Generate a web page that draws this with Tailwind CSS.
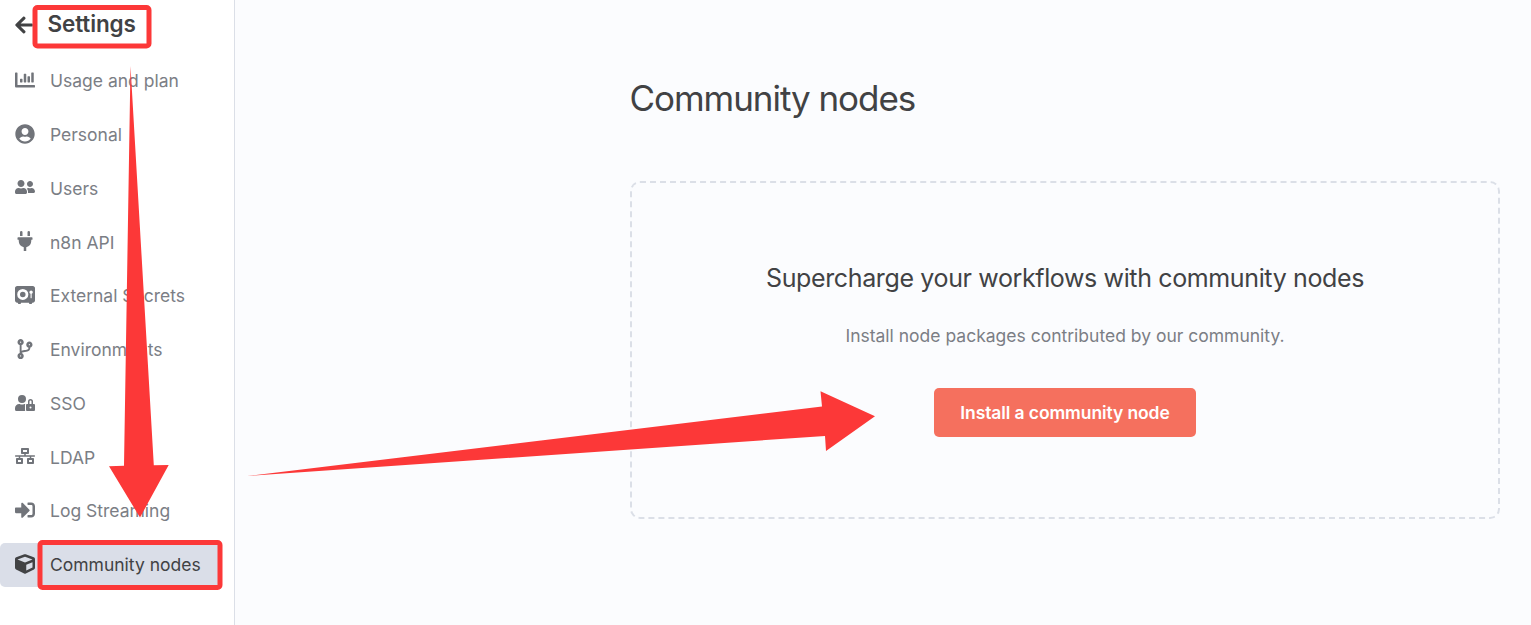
<!DOCTYPE html>
<html lang="en">
<head>
<meta charset="utf-8">
<title>Community nodes</title>
<script src="https://cdn.jsdelivr.net/npm/@tailwindcss/browser@4"></script>
</head>
<body class="relative flex h-[625px] w-[1531px] overflow-hidden bg-[#fbfcfe] font-['Inter',sans-serif] text-[17.5px] text-[#414244]">
<aside class="flex w-[235px] shrink-0 flex-col border-r border-[#dbdfe7] bg-white">
  <header class="flex h-[49px] items-center gap-[14.5px] pl-[15px]">
    <svg class="h-5 w-[18px] shrink-0 fill-current" viewBox="0 0 448 512"><path d="M257.5 445.1l-22.2 22.2c-9.4 9.4-24.6 9.4-33.9 0L7 273c-9.4-9.4-9.4-24.6 0-33.9L201.4 44.7c9.4-9.4 24.6-9.4 33.9 0l22.2 22.2c9.5 9.5 9.3 25-.4 34.3L136.6 216H424c13.3 0 24 10.7 24 24v32c0 13.3-10.7 24-24 24H136.6l120.5 114.8c9.8 9.3 10 24.8.4 34.3z"/></svg>
    <h2 class="pb-px text-[22.5px] leading-7 font-semibold tracking-[-0.12px]">Settings</h2>
  </header>
  <nav class="mt-[9.4px] flex flex-col gap-[9.8px] pr-3 text-[#7b7e85] [&_svg]:mb-[1.3px]">
    <a class="flex h-11 shrink-0 items-center gap-[15px] pl-[15px]"><svg class="h-5 w-5 fill-[#71747a]" viewBox="0 0 512 512"><path d="M332.8 320h38.4c6.4 0 12.8-6.4 12.8-12.8V172.8c0-6.4-6.4-12.8-12.8-12.8h-38.4c-6.4 0-12.8 6.4-12.8 12.8v134.4c0 6.4 6.4 12.8 12.8 12.8zm96 0h38.4c6.4 0 12.8-6.4 12.8-12.8V76.8c0-6.4-6.4-12.8-12.8-12.8h-38.4c-6.4 0-12.8 6.4-12.8 12.8v230.4c0 6.4 6.4 12.8 12.8 12.8zm-288 0h38.4c6.4 0 12.8-6.4 12.8-12.8v-70.4c0-6.4-6.4-12.8-12.8-12.8h-38.4c-6.4 0-12.8 6.4-12.8 12.8v70.4c0 6.4 6.4 12.8 12.8 12.8zm96 0h38.4c6.4 0 12.8-6.4 12.8-12.8V108.8c0-6.4-6.4-12.8-12.8-12.8h-38.4c-6.4 0-12.8 6.4-12.8 12.8v198.4c0 6.4 6.4 12.8 12.8 12.8zM496 384H64V80c0-8.84-7.16-16-16-16H16C7.16 64 0 71.16 0 80v336c0 17.67 14.33 32 32 32h464c8.84 0 16-7.16 16-16v-32c0-8.84-7.16-16-16-16z"/></svg><span class="pt-0.5">Usage and plan</span></a>
    <a class="flex h-11 shrink-0 items-center gap-[15px] pl-[15px]"><svg class="h-5 w-5 fill-[#71747a]" viewBox="0 0 496 512"><path d="M248 8C111 8 0 119 0 256s111 248 248 248 248-111 248-248S385 8 248 8zm0 96c48.6 0 88 39.4 88 88s-39.4 88-88 88-88-39.4-88-88 39.4-88 88-88zm0 344c-58.7 0-111.3-26.6-146.5-68.2 18.8-35.4 55.6-59.8 98.5-59.8 2.4 0 4.8.4 7.1 1.1 13 4.2 26.6 6.9 40.9 6.9 14.3 0 28-2.7 40.9-6.9 2.3-.7 4.7-1.1 7.1-1.1 42.9 0 79.7 24.4 98.5 59.8C359.3 421.4 306.7 448 248 448z"/></svg><span class="pt-0.5">Personal</span></a>
    <a class="flex h-11 shrink-0 items-center gap-[15px] pl-[15px]"><svg class="h-5 w-5 fill-[#71747a]" viewBox="0 0 640 512"><path d="M192 256c61.9 0 112-50.1 112-112S253.9 32 192 32 80 82.1 80 144s50.1 112 112 112zm76.8 32h-8.3c-20.8 10-43.9 16-68.5 16s-47.6-6-68.5-16h-8.3C51.6 288 0 339.6 0 403.2V432c0 26.5 21.5 48 48 48h288c26.5 0 48-21.5 48-48v-28.8c0-63.6-51.6-115.2-115.2-115.2zM480 256c53 0 96-43 96-96s-43-96-96-96-96 43-96 96 43 96 96 96zm48 32h-3.8c-13.9 4.8-28.6 8-44.2 8s-30.3-3.2-44.2-8H432c-20.4 0-39.2 5.9-55.7 15.4 24.4 26.3 39.7 61.2 39.7 99.8v38.4c0 2.2-.5 4.3-.6 6.4H592c26.5 0 48-21.5 48-48 0-61.9-50.1-112-112-112z"/></svg><span class="pt-0.5">Users</span></a>
    <a class="flex h-11 shrink-0 items-center gap-[15px] pl-[15px]"><svg class="h-5 w-5 fill-[#71747a]" viewBox="0 0 384 512"><path d="M320 32a32 32 0 0 0-64 0v96h64zm48 128H16a16 16 0 0 0-16 16v32a16 16 0 0 0 16 16h16v32a160.07 160.07 0 0 0 128 156.8V512h64v-99.2A160.07 160.07 0 0 0 352 256v-32h16a16 16 0 0 0 16-16v-32a16 16 0 0 0-16-16zM128 32a32 32 0 0 0-64 0v96h64z"/></svg><span class="pt-0.5">n8n API</span></a>
    <a class="flex h-11 shrink-0 items-center gap-[15px] pl-[15px]"><svg class="h-5 w-5 fill-[#71747a]" viewBox="0 0 576 512"><path d="M64 0C28.7 0 0 28.7 0 64V416c0 35.3 28.7 64 64 64H80l16 32h64l16-32H400l16 32h64l16-32h16c35.3 0 64-28.7 64-64V64c0-35.3-28.7-64-64-64H64zM224 320a80 80 0 1 0 0-160 80 80 0 1 0 0 160zm0-240a160 160 0 1 1 0 320 160 160 0 1 1 0-320zM480 221.3V336c0 8.8-7.2 16-16 16s-16-7.2-16-16V221.3c-18.6-6.6-32-24.4-32-45.3c0-26.5 21.5-48 48-48s48 21.5 48 48c0 20.9-13.4 38.7-32 45.3z"/></svg><span class="pt-0.5">External Secrets</span></a>
    <a class="flex h-11 shrink-0 items-center gap-[15px] pl-[15px]"><svg class="h-5 w-5 fill-[#71747a]" viewBox="0 0 384 512"><path d="M384 144c0-44.2-35.8-80-80-80s-80 35.8-80 80c0 36.4 24.3 67.1 57.5 76.8-.6 16.1-4.2 28.5-11 36.9-15.4 19.2-49.3 22.4-85.2 25.7-28.2 2.6-57.4 5.4-81.3 16.9v-144c32.5-10.2 56-40.5 56-76.3 0-44.2-35.8-80-80-80S0 35.8 0 80c0 35.8 23.5 66.1 56 76.3v199.3C23.5 365.9 0 396.2 0 432c0 44.2 35.8 80 80 80s80-35.8 80-80c0-34-21.2-63.1-51.2-74.6 3.1-5.2 7.8-9.8 14.9-13.4 16.2-8.2 40.4-10.4 66.1-12.8 42.2-3.9 90-8.4 118.2-43.4 14-17.4 21.1-39.8 21.6-67.9 31.6-10.8 54.4-40.7 54.4-75.9zM80 64c8.8 0 16 7.2 16 16s-7.2 16-16 16-16-7.2-16-16 7.2-16 16-16zm0 384c-8.8 0-16-7.2-16-16s7.2-16 16-16 16 7.2 16 16-7.2 16-16 16zm224-320c8.8 0 16 7.2 16 16s-7.2 16-16 16-16-7.2-16-16 7.2-16 16-16z"/></svg><span class="pt-0.5">Environments</span></a>
    <a class="flex h-11 shrink-0 items-center gap-[15px] pl-[15px]"><svg class="h-5 w-5 fill-[#71747a]" viewBox="0 0 640 512"><path d="M224 256A128 128 0 1 0 96 128a128 128 0 0 0 128 128zm96 64a63.08 63.08 0 0 1 8.1-30.5c-4.8-.5-9.5-1.5-14.5-1.5h-16.7a174.08 174.08 0 0 1-145.8 0h-16.7A134.43 134.43 0 0 0 0 422.4V464a48 48 0 0 0 48 48h280.9a63.54 63.54 0 0 1-8.9-32zm288-32h-32v-80a80 80 0 0 0-160 0v80h-32a32 32 0 0 0-32 32v160a32 32 0 0 0 32 32h224a32 32 0 0 0 32-32V320a32 32 0 0 0-32-32zM496 432a32 32 0 1 1 32-32 32 32 0 0 1-32 32zm32-144h-64v-80a32 32 0 0 1 64 0z"/></svg><span class="pt-0.5">SSO</span></a>
    <a class="flex h-11 shrink-0 items-center gap-[15px] pl-[15px]"><svg class="h-5 w-5 fill-[#71747a]" viewBox="0 0 640 512"><path d="M640 264v-16c0-8.84-7.16-16-16-16H344v-40h72c17.67 0 32-14.33 32-32V32c0-17.67-14.33-32-32-32H224c-17.67 0-32 14.33-32 32v128c0 17.67 14.33 32 32 32h72v40H16c-8.84 0-16 7.16-16 16v16c0 8.84 7.16 16 16 16h104v40H64c-17.67 0-32 14.33-32 32v128c0 17.67 14.33 32 32 32h160c17.67 0 32-14.33 32-32V352c0-17.67-14.33-32-32-32h-56v-40h304v40h-56c-17.67 0-32 14.33-32 32v128c0 17.67 14.33 32 32 32h160c17.67 0 32-14.33 32-32V352c0-17.67-14.33-32-32-32h-56v-40h104c8.84 0 16-7.16 16-16zM256 128V64h128v64H256zm-64 320H96v-64h96v64zm352 0h-96v-64h96v64z"/></svg><span class="pt-0.5">LDAP</span></a>
    <a class="flex h-11 shrink-0 items-center gap-[15px] pl-[15px]"><svg class="h-5 w-5 fill-[#71747a]" viewBox="0 0 512 512"><path d="M416 448h-84c-6.6 0-12-5.4-12-12v-40c0-6.6 5.4-12 12-12h84c17.7 0 32-14.3 32-32V160c0-17.7-14.3-32-32-32h-84c-6.6 0-12-5.4-12-12V76c0-6.6 5.4-12 12-12h84c53 0 96 43 96 96v192c0 53-43 96-96 96zm-47-201L201 79c-15-15-41-4.5-41 17v96H24c-13.3 0-24 10.7-24 24v96c0 13.3 10.7 24 24 24h136v96c0 21.5 26 32 41 17l168-168c9.3-9.4 9.3-24.6 0-34z"/></svg><span class="pt-px">Log Streaming</span></a>
    <a class="flex h-11 shrink-0 items-center gap-[15px] rounded-[5px] bg-[#dadee8] pl-[15px] text-[#414244]"><svg class="h-5 w-5 fill-current" viewBox="0 0 512 512"><path d="M239.1 6.3l-208 78c-18.7 7-31.1 25-31.1 45v225.1c0 18.2 10.3 34.8 26.5 42.9l208 104c13.5 6.8 29.4 6.8 42.9 0l208-104c16.3-8.1 26.5-24.8 26.5-42.9V129.3c0-20-12.4-37.9-31.1-44.9l-208-78C262 2.2 250 2.2 239.1 6.3zM256 68.4l192 72v1.1l-192 78-192-78v-1.1l192-72zm32 356V275.5l160-65v133.9l-160 80z"/></svg><span class="pt-0.5">Community nodes</span></a>
  </nav>
</aside>
<main class="flex-1 pt-[76px] pr-[31px] pl-[395px]">
  <h1 class="-ml-[0.5px] text-[35px] leading-[44px] tracking-[-1.04px]">Community nodes</h1>
  <section class="mt-[61px] flex h-[338px] flex-col items-center rounded-[10px] border-2 border-dashed border-[#dbdfe7] pt-[79px]">
    <h2 class="text-[25px] leading-8 tracking-[-0.37px] whitespace-nowrap">Supercharge your workflows with community nodes</h2>
    <p class="mt-[30px] leading-6 text-[#7b7e85]">Install node packages contributed by our community.</p>
    <button class="mt-10 h-[49px] w-[262px] rounded-[5px] bg-[#f5705e] pt-0.5 font-semibold tracking-[-0.1px] text-white">Install a community node</button>
  </section>
</main>
<svg class="pointer-events-none absolute inset-0" width="1531" height="625" viewBox="0 0 1531 625" fill="none">
  <g stroke="#fc3838" stroke-width="5" stroke-linejoin="round">
    <rect x="35" y="7.5" width="114" height="38.5" rx="2.5"/>
    <rect x="40" y="542.5" width="180" height="45" rx="2.5"/>
  </g>
  <g fill="#fc3838">
    <path d="M130.500 66L153.800 465.300L168.700 465L140 517.500L109 466.200L124 465.800Z"/>
    <path d="M247 476L822 406.500L820.500 391.300L875 416.300L826 451L825 436Z"/>
  </g>
</svg>
</body>
</html>
